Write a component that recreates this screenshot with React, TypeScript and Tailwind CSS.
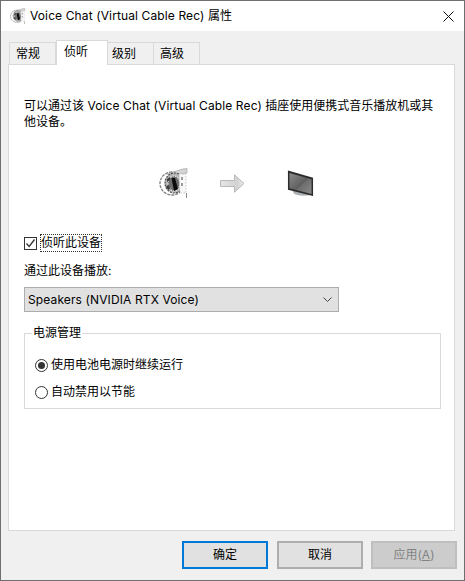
import React from "react";

const font = { fontFamily: 'Inter, "Noto Sans CJK SC", sans-serif' };

function SpeakerIcon({ size = 30 }: { size?: number }) {
  return (
    <svg width={size} height={size} viewBox="0 0 30 30">
      <ellipse cx="13" cy="15.5" rx="12" ry="11.5" fill="#fff" stroke="#808080" strokeWidth="1.3" strokeDasharray="3 1" />
      <path d="M7 6 L24 1 L28 0.5 L28 5 L17 7Z" fill="#d4d4d4" stroke="#9a9a9a" strokeWidth="0.6" />
      <ellipse cx="15.5" cy="15" rx="9.5" ry="10" fill="#b4b4b4" stroke="#4a4a4a" strokeWidth="1.2" strokeDasharray="2 1" />
      <ellipse cx="15" cy="15.5" rx="6" ry="7.5" fill="#6e6e6e" stroke="#e4e4e4" strokeWidth="1.2" strokeDasharray="1.5 1" />
      <path d="M12.5 10 L16 10 L19 21 L15 23 Z" fill="#0c0c0c" />
      <path d="M8 11 L11 9 L11 12 L8 14Z M7 18 L10 17 L11 21 L9 22Z" fill="#3c3c3c" />
      <path d="M20 6 L27 6 L27 25 L21 25 Z" fill="#f7f7f7" stroke="#bdbdbd" strokeWidth="0.8" strokeDasharray="1.5 1.5" />
      <path d="M22 9 L24 9 L24 12 L22 12Z M22 15 L24 15 L24 18 L22 18Z" fill="#9c9c9c" />
      <path d="M27 25 L28 25 L28 30 L27 30Z" fill="#888" />
    </svg>
  );
}

function ArrowIcon() {
  return (
    <svg width="25" height="19" viewBox="0 0 25 19">
      <defs>
        <linearGradient id="arrowFill" x1="0" y1="0" x2="1" y2="0">
          <stop offset="0" stopColor="#e6e6e6" />
          <stop offset="0.7" stopColor="#d2d2d2" />
          <stop offset="1" stopColor="#ececec" />
        </linearGradient>
      </defs>
      <path d="M0.5 6.5 H14.5 V0.8 L24 9.5 L14.5 18.2 V12.5 H0.5 Z" fill="url(#arrowFill)" stroke="#b9b9b9" strokeWidth="1" />
    </svg>
  );
}

function MonitorIcon() {
  return (
    <svg width="27" height="27" viewBox="0 0 27 28">
      <defs>
        <linearGradient id="screenFill" x1="0" y1="0" x2="1" y2="1">
          <stop offset="0" stopColor="#8c8c8c" />
          <stop offset="0.55" stopColor="#5e5e5e" />
          <stop offset="0.56" stopColor="#6c6c6c" />
          <stop offset="1" stopColor="#8a8a8a" />
        </linearGradient>
      </defs>
      <path d="M5 21 H22 L24 26 Q14 28 7 25 Z" fill="#a9b0b4" />
      <path d="M0.5 0.5 L26.5 8 V27 L0.5 20.5 Z" fill="#2b2b2b" />
      <path d="M2 3.2 L25 9.6 V24.8 L2 19 Z" fill="url(#screenFill)" />
    </svg>
  );
}

function Latin({ children }: { children: React.ReactNode }) {
  return <span className="tracking-[0.12px]">{children}</span>;
}

function Tab({ label, active, w, pl }: { label: string; active?: boolean; w: string; pl: string }) {
  if (active) {
    return (
      <div className={`relative z-10 -mb-px flex h-[25px] ${w} ${pl} items-start border border-b-0 border-[#d9d9d9] bg-white pt-[3px] text-[12px] leading-[16px] text-black`}>
        {label}
      </div>
    );
  }
  return (
    <div className={`flex h-[22px] ${w} ${pl} items-center border border-b-0 border-[#d9d9d9] bg-[#f0f0f0] -ml-px text-[12px] leading-[16px] text-black`}>
      {label}
    </div>
  );
}

function Radio({ checked, label }: { checked?: boolean; label: string }) {
  return (
    <div className="flex h-[16px] items-center gap-[3px]">
      <span className="flex h-[13px] w-[13px] items-center justify-center rounded-full border border-[#333333] bg-white">
        {checked && <span className="h-[7px] w-[7px] rounded-full bg-[#333333]" />}
      </span>
      <span className="text-[12px] leading-[16px] text-black">{label}</span>
    </div>
  );
}

function Button({ label, kind }: { label: React.ReactNode; kind: "primary" | "normal" | "disabled" }) {
  const cls =
    kind === "primary"
      ? "border-2 border-[#0078d7] bg-[#e1e1e1] text-black"
      : kind === "normal"
        ? "border-2 border-[#adadad] bg-[#e1e1e1] text-black"
        : "-ml-px border-2 border-[#bfbfbf] bg-[#cccccc] text-[#838383]";
  return (
    <div className={`flex h-[28px] w-[86px] items-center justify-center text-[12px] leading-[16px] ${cls}`}>
      {label}
    </div>
  );
}

export default function App() {
  return (
    <div style={font} className="flex h-[581px] w-[465px] flex-col border border-[#6f6f6f] bg-[#f0f0f0]">
      <div className="flex h-[30px] items-center bg-white pl-[9px] pr-[9px]">
        <SpeakerIcon size={16} />
        <span className="ml-[4px] text-[12px] leading-[16px] text-black">
          <Latin>Voice Chat (Virtual Cable Rec)</Latin> 属性
        </span>
        <svg className="ml-auto mr-[1px]" width="11" height="11" viewBox="0 0 11 11">
          <path d="M0.5 0.5 L10.5 10.5 M10.5 0.5 L0.5 10.5" stroke="#111" strokeWidth="1" fill="none" />
        </svg>
      </div>

      <div className="flex flex-1 flex-col pl-[7px] pr-[9px] pt-[9px]">
        <div className="flex h-[24px] items-end pl-[2px]">
          <Tab label="常规" w="w-[47px]" pl="pl-[6px]" />
          <Tab label="侦听" w="w-[52px]" pl="pl-[7px]" active />
          <Tab label="级别" w="w-[47px]" pl="pl-[4px]" />
          <Tab label="高级" w="w-[47px]" pl="pl-[6px]" />
        </div>

        <div className="flex h-[467px] flex-col border border-[#d9d9d9] bg-white pl-[15px] pr-[13px]">
          <p className="mt-[33px] h-[32px] whitespace-nowrap text-[12px] leading-[16px] text-black">
            可以通过该 <Latin>Voice Chat (Virtual Cable Rec)</Latin> 插座使用便携式音乐播放机或其
            <br />
            他设备。
          </p>

          <div className="mt-[38px] flex h-[30px] items-center">
            <div className="ml-[135px] flex items-center">
              <SpeakerIcon />
            </div>
            <div className="ml-[31px]"><ArrowIcon /></div>
            <div className="ml-[42px]"><MonitorIcon /></div>
          </div>

          <div className="mt-[36px] flex h-[18px] items-center">
            <span className="flex h-[13px] w-[13px] items-center justify-center border border-[#333333] bg-white">
              <svg width="11" height="11" viewBox="0 0 11 11">
                <path d="M1.5 5.5 L4.2 8.5 L9.5 1.5" stroke="#333" strokeWidth="1.3" fill="none" />
              </svg>
            </span>
            <span className="ml-[3px] border border-dotted border-[#333333] px-0 text-[12px] leading-[16px] text-black">侦听此设备</span>
          </div>

          <div className="mt-[11px] h-[16px] text-[12px] leading-[16px] text-black">通过此设备播放:</div>

          <div className="mt-[8px] flex h-[25px] w-[315px] items-center justify-between border border-[#adadad] bg-[#e1e1e1] pl-[3px] pr-[6px]">
            <span className="text-[12px] leading-[16px] text-black"><Latin>Speakers (NVIDIA RTX Voice)</Latin></span>
            <svg width="9" height="6" viewBox="0 0 9 6">
              <path d="M0.5 0.5 L4.5 4.5 L8.5 0.5" stroke="#444" strokeWidth="1" fill="none" />
            </svg>
          </div>

          <fieldset className="mt-[13px] h-[84px] w-[417px] border border-[#d9d9d9] px-[10px]">
            <legend className="ml-[-3px] px-[1px] text-[12px] leading-[16px] text-black">电源管理</legend>
            <div className="mt-[16px] flex flex-col gap-[11px]">
              <Radio checked label="使用电池电源时继续运行" />
              <Radio label="自动禁用以节能" />
            </div>
          </fieldset>
        </div>

        <div className="-mr-[2px] flex flex-1 items-center justify-end pb-[1px]">
          <div className="mr-[9px]"><Button label="确定" kind="primary" /></div>
          <div className="mr-[9px]"><Button label="取消" kind="normal" /></div>
          <Button label={<span>应用(<span className="underline">A</span>)</span>} kind="disabled" />
        </div>
      </div>
    </div>
  );
}
